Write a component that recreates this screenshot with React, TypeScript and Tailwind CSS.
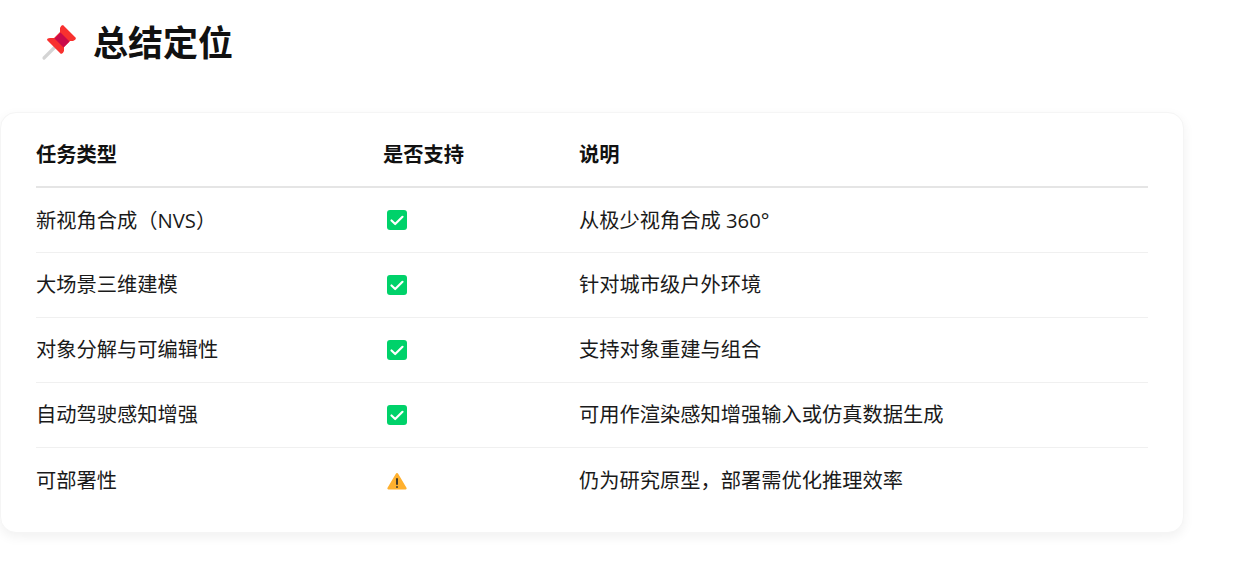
const font = { fontFamily: '"Open Sans", "Noto Sans CJK SC", "Noto Sans", sans-serif' };

function Pin() {
  return (
    <svg width="38" height="38" viewBox="0 0 38 38" className="shrink-0">
      <path d="M4 34 L17 21" stroke="#d4d4d4" strokeWidth="3.2" strokeLinecap="round" />
      <path d="M23 1 L36 14 Q36 16 33 17 L30 17 L24 23 L24 27 Q23 30 21 30 L7 16 Q7 14 10 14 L14 14 L20 8 L20 4 Q21 1 23 1 Z" fill="#f8312f" />
      <path d="M20.5 8.5 L29.5 17.5 L23.5 23.5 L14.5 14.5 Z" fill="#ca0b4a" />
    </svg>
  );
}

function Check() {
  return (
    <svg width="20" height="20" viewBox="0 0 20 20">
      <rect x="0" y="0" width="20" height="20" rx="3" fill="#00d26a" />
      <path d="M4.5 10.5 L8.2 14 L15.5 6.8" stroke="#fff" strokeWidth="2.2" fill="none" strokeLinecap="round" strokeLinejoin="round" />
    </svg>
  );
}

function Warn() {
  return (
    <svg width="22" height="20" viewBox="0 0 22 20" className="-ml-[1px] mt-[2px]">
      <path d="M11 2 Q11.8 2 12.3 3 L20.6 17 Q21 18.4 19.6 18.6 L2.4 18.6 Q1 18.4 1.4 17 L9.7 3 Q10.2 2 11 2 Z" fill="#ffb02e" />
      <rect x="10" y="7" width="2" height="7" rx="1" fill="#433b2b" />
      <rect x="10" y="15" width="2" height="2" rx="1" fill="#433b2b" />
    </svg>
  );
}

const rows: [string, "ok" | "warn", string][] = [
  ["新视角合成（NVS）", "ok", "从极少视角合成 360°"],
  ["大场景三维建模", "ok", "针对城市级户外环境"],
  ["对象分解与可编辑性", "ok", "支持对象重建与组合"],
  ["自动驾驶感知增强", "ok", "可用作渲染感知增强输入或仿真数据生成"],
  ["可部署性", "warn", "仍为研究原型，部署需优化推理效率"],
];

export default function App() {
  return (
    <div style={font} className="w-[1259px] h-[574px] bg-white overflow-hidden text-[#1a1a1a]">
      <div className="flex items-center h-[38px] mt-[24px] ml-[40px] gap-[15px]">
        <Pin />
        <h1 className="text-[35px] leading-[38px] font-bold text-[#111]">总结定位</h1>
      </div>
      <div className="mt-[50px] w-[1184px] h-[421px] bg-white rounded-[16px] px-[35px] pt-[9px] border border-[#f5f5f5] shadow-[0_4px_12px_rgba(0,0,0,0.06)]">
        <table className="w-full border-collapse text-[20.25px] table-fixed">
          <thead>
            <tr className="h-[65px] border-b-2 border-[#e5e5e5]">
              <th className="w-[347px] text-left font-bold text-[#111]">任务类型</th>
              <th className="w-[196px] text-left font-bold text-[#111]">是否支持</th>
              <th className="text-left font-bold text-[#111]">说明</th>
            </tr>
          </thead>
          <tbody>
            {rows.map(([a, s, c], i) => (
              <tr key={a} className={i < rows.length - 1 ? "h-[65px] border-b border-[#f0f0f0]" : "h-[65px]"}>
                <td>{a}</td>
                <td>
                  <span className="flex pl-[4px]">{s === "ok" ? <Check /> : <Warn />}</span>
                </td>
                <td>{c}</td>
              </tr>
            ))}
          </tbody>
        </table>
      </div>
    </div>
  );
}
